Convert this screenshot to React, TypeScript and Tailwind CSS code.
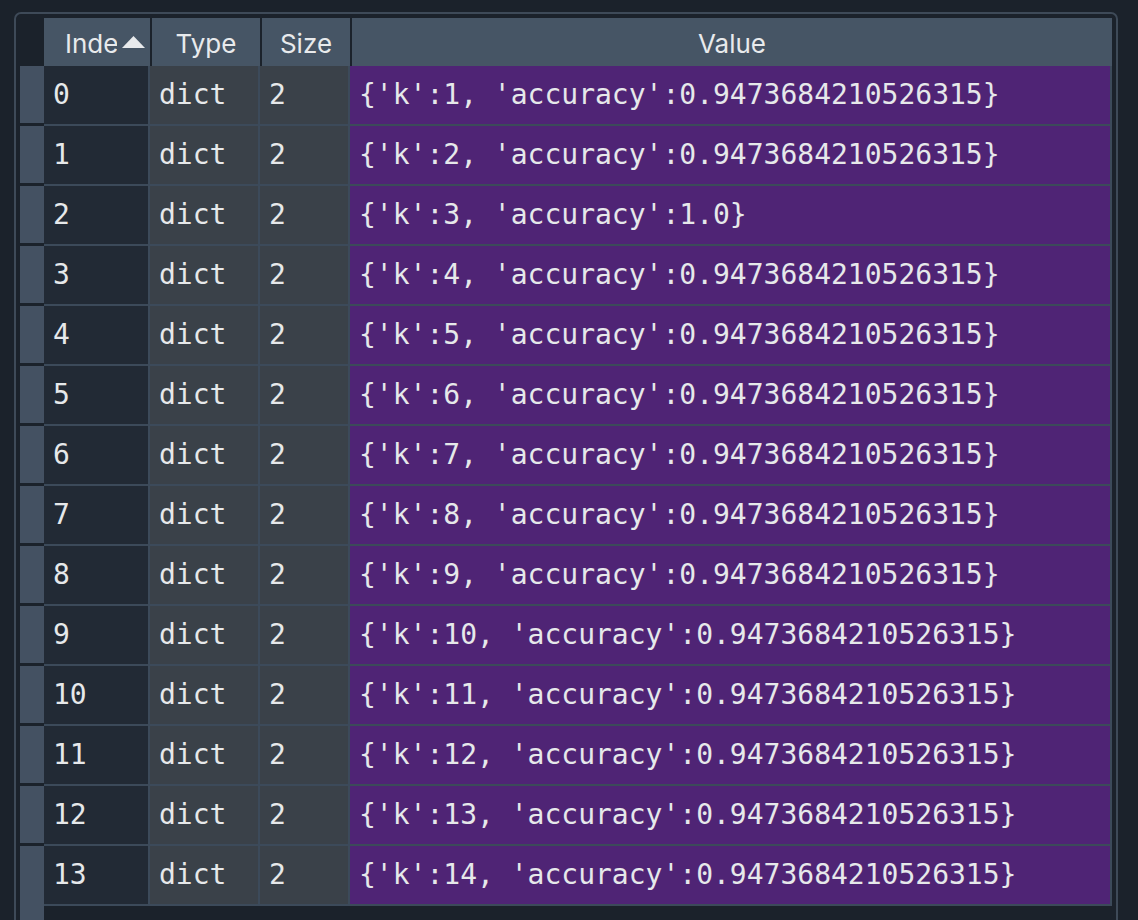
const rows = Array.from({ length: 14 }, (_, i) => ({
  index: i,
  type: "dict",
  size: 2,
  value: `{'k':${i + 1}, 'accuracy':${i === 2 ? "1.0" : "0.9473684210526315"}}`,
}));

const mono = { fontFamily: '"DejaVu Sans Mono", "Liberation Mono", monospace' };

export default function App() {
  return (
    <div className="h-[920px] w-[1138px] overflow-hidden bg-[#1b222b] pl-[14px] pt-[12px]">
      <div className="h-[980px] w-[1104px] rounded-[7px] border-2 border-[#3e4a58] p-[4px]">
        {/* Header */}
        <div
          className="flex h-[48px] pl-[24px] text-[26px] text-[#e8eaec]"
          style={{ fontFamily: 'Inter, "Liberation Sans", sans-serif' }}
        >
          <div className="flex w-[108px] items-center border-r-2 border-[#1b222b] bg-[#465565] pl-[21px] pt-[2px]">
            <span className="w-[52px] overflow-hidden whitespace-nowrap">Index</span>
            <svg width="23" height="12" viewBox="0 0 23 12" className="ml-[5px] -mt-[2px]">
              <polygon points="11.5,0 23,12 0,12" fill="#e8eaec" />
            </svg>
          </div>
          <div className="flex w-[110px] items-center justify-center border-r-2 border-[#1b222b] bg-[#465565] pt-[2px]">
            Type
          </div>
          <div className="flex w-[90px] items-center justify-center border-r-2 border-[#1b222b] bg-[#465565] pt-[2px]">
            Size
          </div>
          <div className="flex w-[760px] items-center justify-center bg-[#465565] pt-[2px]">Value</div>
        </div>

        {/* Body */}
        <div className="flex flex-col text-[28px] text-[#e6e8ea]" style={mono}>
          {rows.map((r, i) => (
            <div key={r.index} className="flex h-[60px]">
              <div
                className={`w-[24px] bg-[#445162] ${
                  i === rows.length - 1 ? "" : "border-b-[3px] border-[#1b222b]"
                }`}
              />
              <div className="flex w-[106px] items-center border-r-2 border-b-2 border-[#3c4a5a] bg-[#222a35] pl-[9px]">
                {r.index}
              </div>
              <div className="flex w-[110px] items-center border-r-2 border-b-2 border-[#3c4a5a] bg-[#3a4149] pl-[9px]">
                {r.type}
              </div>
              <div className="flex w-[90px] items-center border-r-2 border-b-2 border-[#3c4a5a] bg-[#3a4149] pl-[9px]">
                {r.size}
              </div>
              <div className="flex w-[762px] items-center whitespace-nowrap border-r-2 border-b-2 border-[#3c4a5a] bg-[#4f2475] pl-[9px]">
                {r.value}
              </div>
            </div>
          ))}
          <div className="flex h-[40px]">
            <div className="w-[24px] bg-[#445162]" />
          </div>
        </div>
      </div>
    </div>
  );
}
